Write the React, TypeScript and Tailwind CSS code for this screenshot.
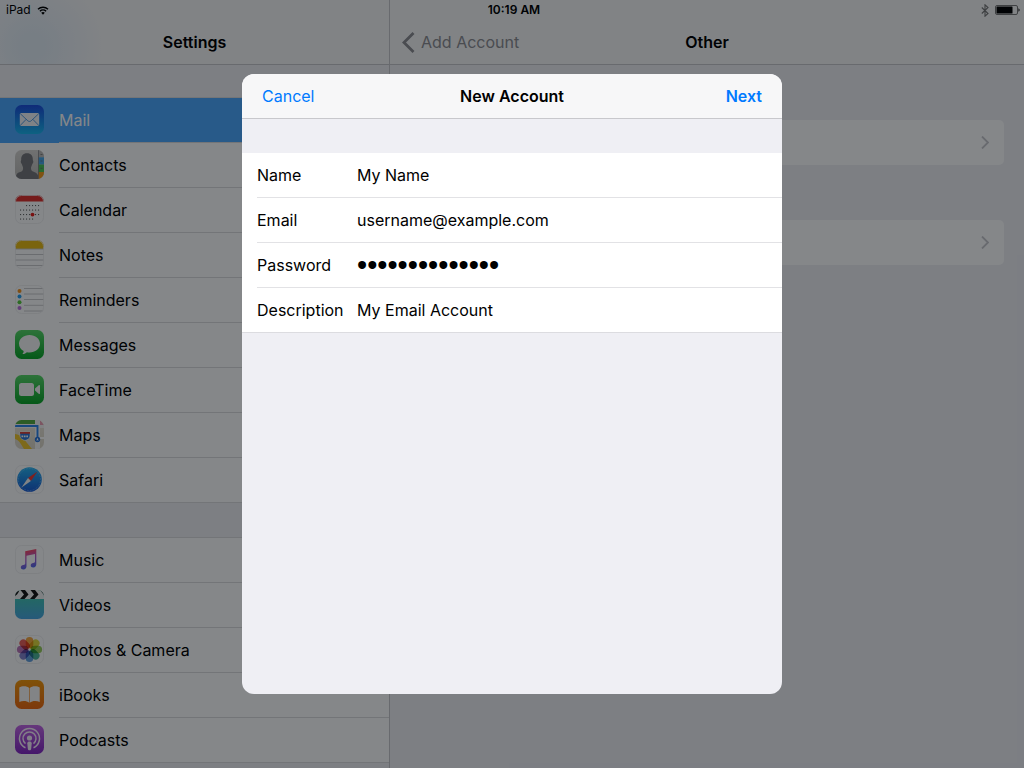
import { useState } from "react";
import type { ReactNode } from "react";

const IconFrame = ({ id, from, to, children }: { id: string; from: string; to: string; children?: ReactNode }) => (
    <svg viewBox="0 0 29 29" className="mb-0.5 h-[29px] w-[29px] shrink-0" aria-hidden="true">
        <defs>
            <linearGradient id={`${id}-bg`} x1="0" y1="0" x2="0" y2="1">
                <stop offset="0" stopColor={from} />
                <stop offset="1" stopColor={to} />
            </linearGradient>
            <clipPath id={`${id}-clip`}>
                <rect width="29" height="29" rx="6.5" />
            </clipPath>
        </defs>
        <g clipPath={`url(#${id}-clip)`}>
            <rect width="29" height="29" fill={`url(#${id}-bg)`} />
            {children}
        </g>
        {from === "#ffffff" && (
            <rect x="0.5" y="0.5" width="28" height="28" rx="6" fill="none" stroke="#ededef" strokeWidth="0.8" />
        )}
    </svg>
);

const MailIcon = () => (
    <IconFrame id="mail" from="#1d4fe0" to="#1bb8f0">
        <rect x="4.8" y="8" width="19.4" height="13" rx="1.4" fill="#f4f6fa" />
        <path d="M5.2 8.6l7.6 7.2c1 .9 2.4.9 3.4 0l7.6-7.2M5.2 20.5l5.9-6.1M23.8 20.5l-5.9-6.1" fill="none" stroke="#2f86dc" strokeWidth="0.8" />
    </IconFrame>
);

const ContactsIcon = () => (
    <IconFrame id="contacts" from="#d8d6d2" to="#bdbbb8">
        <path d="M12 3.2c3.9 0 6 2.6 5.8 6.3-.1 1.1.9 1.2.4 2.9-.3 1-.9 1.2-1.2 2.4-.4 1.6-1 2-1 3.4 0 2.6 1.3 3.1 3.7 4 1.8.7 3 1.8 3.5 3.8V29H1v-3c.6-2 1.6-3 3.4-3.7 2.5-.9 3.7-1.5 3.7-4.1 0-1.4-.7-1.9-1-3.4-.3-1.2-.9-1.4-1.2-2.4-.4-1.7.4-1.9.3-2.9C6 5.8 8.2 3.2 12 3.2z" fill="#77777b" />
        <rect x="23.5" width="5.5" height="7.3" fill="#bfbdba" />
        <rect x="23.5" y="7.3" width="5.5" height="7.3" fill="#4aa8e8" />
        <rect x="23.5" y="14.6" width="5.5" height="7.4" fill="#4bc658" />
        <rect x="23.5" y="22" width="5.5" height="7" fill="#f59b1c" />
        <path d="M23.5 0v29" stroke="#77777b" strokeWidth="0.7" />
        <path d="M25.5 11h2M25.5 18.3h2M25.5 4.5h2" stroke="#666" strokeWidth="0.7" />
    </IconFrame>
);

const CalendarIcon = () => (
    <IconFrame id="calendar" from="#ffffff" to="#ffffff">
        <rect width="29" height="6.5" fill="#e0302c" />
        {[10.5, 15, 19.5, 24].map((y, row) =>
            [5.5, 8.5, 11.5, 14.5, 17.5, 20.5, 23.5]
                .filter((_, col) => (row > 0 || col > 1) && (row < 3 || col < 5))
                .map((x) => <rect key={`${x}-${y}`} x={x - 0.5} y={y - 0.5} width="1.1" height="1.1" fill="#666" />)
        )}
        <circle cx="17.5" cy="19.6" r="1.9" fill="#e8201c" />
    </IconFrame>
);

const NotesIcon = () => (
    <IconFrame id="notes" from="#ffffff" to="#ffffff">
        <rect width="29" height="9" fill="#eabc14" />
        <path d="M0 9h29M0 14.5h29M0 20h29M0 25.5h29" stroke="#c6c6c8" strokeWidth="0.9" />
    </IconFrame>
);

const RemindersIcon = () => (
    <IconFrame id="reminders" from="#ffffff" to="#ffffff">
        <circle cx="4.5" cy="6" r="2" fill="#f59420" />
        <circle cx="4.5" cy="11.5" r="2" fill="#28a0ee" />
        <circle cx="4.5" cy="17.3" r="2" fill="#57cc3e" />
        <circle cx="4.5" cy="23" r="2" fill="#bd72dc" />
        <path d="M9 3.5h20M9 9h20M9 14.5h20M9 20.3h20M9 26h20" stroke="#c6c6c8" strokeWidth="0.9" />
    </IconFrame>
);

const MessagesIcon = () => (
    <IconFrame id="messages" from="#58d868" to="#0ba628">
        <path d="M14.5 5C8.7 5 4 8.9 4 13.7c0 3.1 1.8 5.7 4.7 7.3-.1 1.2-.5 2.2-1.3 3.1 1.7 0 3.2-.6 4.5-1.9.8.2 1.7.3 2.6.3C20.3 22.5 25 18.5 25 13.7S20.3 5 14.5 5z" fill="#f7f7f7" />
    </IconFrame>
);

const FaceTimeIcon = () => (
    <IconFrame id="facetime" from="#58d868" to="#0ba628">
        <rect x="4" y="8" width="15" height="13" rx="2.5" fill="#f7f7f7" />
        <path d="M20 13.5l3.7-3.2c.6-.5 1.3-.3 1.3.6v7.3c0 .9-.7 1.1-1.3.6L20 15.6z" fill="#f7f7f7" />
    </IconFrame>
);

const MapsIcon = () => (
    <IconFrame id="maps" from="#ece7da" to="#dcd6c8">
        <path d="M0 0h20v4H0z" fill="#55ac42" />
        <path d="M0 4h29v4H0z" fill="#f6f6f6" />
        <path d="M0 14c7 1 9 5 12 9l5 6H9C6 24 4 20 0 19z" fill="#f0c52c" />
        <path d="M20 0h5v29h-5z" fill="#f6f6f6" />
        <path d="M25 0l4 5h-4z" fill="#ee9fb4" />
        <path d="M25 17h4v2h-4z" fill="#fff" />
        <path d="M0 6h22.5v13" fill="none" stroke="#2b84ec" strokeWidth="1.9" />
        <path d="M5 12h10c0 4 1 7-5 8.5C4 19 5 16 5 12z" fill="#2e77d8" stroke="#fff" strokeWidth="0.6" />
        <path d="M5 12.8h10" stroke="#dc4338" strokeWidth="1.7" />
        <path d="M6.5 16.4h7" stroke="#fff" strokeWidth="1.6" strokeDasharray="1.7 0.7" />
        <circle cx="22.5" cy="19.5" r="2.7" fill="#2b75d8" />
        <path d="M22.5 17.8l1.2 3-1.2-.6-1.2.6z" fill="#fff" />
    </IconFrame>
);

const SafariIcon = () => (
    <IconFrame id="safari" from="#ffffff" to="#ffffff">
        <defs>
            <linearGradient id="safari-dial" x1="0" y1="0" x2="0" y2="1">
                <stop offset="0" stopColor="#28b5f2" />
                <stop offset="1" stopColor="#1a5bd4" />
            </linearGradient>
        </defs>
        <circle cx="14.5" cy="14.5" r="12.3" fill="url(#safari-dial)" />
        <circle cx="14.5" cy="14.5" r="11" fill="none" stroke="#a9d7f7" strokeWidth="0.9" strokeDasharray="0.4 1.2" />
        <path d="M22.5 6.5L15.9 16l-2.9-2.9z" fill="#f23a33" />
        <path d="M6.5 22.5L13 13.1l2.9 2.9z" fill="#f8f8f8" />
    </IconFrame>
);

const MusicIcon = () => (
    <IconFrame id="music" from="#ffffff" to="#ffffff">
        <defs>
            <linearGradient id="music-note" x1="0.3" y1="0" x2="0.5" y2="1">
                <stop offset="0.1" stopColor="#fa4a67" />
                <stop offset="0.5" stopColor="#b45ccd" />
                <stop offset="1" stopColor="#4c6df0" />
            </linearGradient>
        </defs>
        <path d="M10.2 6.2L21.3 4v15.2c0 1.9-1.2 3-3 3.2-1.5.1-2.6-.7-2.6-2 0-1.4 1-2.2 2.5-2.5 1.3-.2 1.8-.5 1.8-1.5V9l-8.5 1.7v10.5c0 1.9-1.2 3-3 3.2-1.5.1-2.7-.7-2.7-2 0-1.4 1-2.2 2.5-2.5 1.3-.2 1.9-.5 1.9-1.5z" fill="url(#music-note)" />
    </IconFrame>
);

const VideosIcon = () => (
    <IconFrame id="videos" from="#43cfa6" to="#4aa7e2">
        <rect width="29" height="9" fill="#f3f3f3" />
        <path d="M0 9V6l2-1.5L4 1.5 3 0H0zM5.5 0H10l3.5 4.5L9.5 9H5l4-4.5zM15.5 0H20l3.5 4.5L19.5 9H15l4-4.5zM25 0h4v5z" fill="#161616" />
    </IconFrame>
);

const petals = ["#f69a1f", "#dcd51d", "#86c440", "#2fa988", "#4a90d9", "#6f6fc4", "#b05fae", "#e8453c"];

const PhotosIcon = () => (
    <IconFrame id="photos" from="#ffffff" to="#ffffff">
        {petals.map((color, i) => (
            <rect
                key={color}
                x="10.7"
                y="1.9"
                width="7.6"
                height="11.4"
                rx="3.8"
                fill={color}
                transform={`rotate(${i * 45} 14.5 14.5)`}
                className="opacity-85 mix-blend-multiply"
            />
        ))}
    </IconFrame>
);

const BooksIcon = () => (
    <IconFrame id="books" from="#f59a0b" to="#ee6a12">
        <path d="M14.2 8C12.3 6 7 5.6 4.3 7.6V22c3-1.6 7.6-1.5 9.9.8zM14.8 8c1.9-2 7.2-2.4 9.9-.4V22c-3-1.6-7.6-1.5-9.9.8z" fill="#fafafa" />
    </IconFrame>
);

const PodcastsIcon = () => (
    <IconFrame id="podcasts" from="#c468e6" to="#8428c4">
        <g fill="none" stroke="#f7effb" strokeWidth="1.5">
            <path d="M10.5 22.7a10 10 0 1 1 8 0" />
            <path d="M10.5 18.6a6.5 6.5 0 1 1 8 0" />
        </g>
        <circle cx="14.5" cy="13" r="2.6" fill="#f7effb" />
        <path d="M12.3 18.2c0-1.2 1-1.7 2.2-1.7s2.2.5 2.2 1.7l-.5 5.5c-.1 1-.8 1.5-1.7 1.5s-1.6-.5-1.7-1.5z" fill="#f7effb" />
    </IconFrame>
);

const groups = [
    [
        { name: "Mail", Icon: MailIcon },
        { name: "Contacts", Icon: ContactsIcon },
        { name: "Calendar", Icon: CalendarIcon },
        { name: "Notes", Icon: NotesIcon },
        { name: "Reminders", Icon: RemindersIcon },
        { name: "Messages", Icon: MessagesIcon },
        { name: "FaceTime", Icon: FaceTimeIcon },
        { name: "Maps", Icon: MapsIcon },
        { name: "Safari", Icon: SafariIcon },
    ],
    [
        { name: "Music", Icon: MusicIcon },
        { name: "Videos", Icon: VideosIcon },
        { name: "Photos & Camera", Icon: PhotosIcon },
        { name: "iBooks", Icon: BooksIcon },
        { name: "Podcasts", Icon: PodcastsIcon },
    ],
];

const fields = [
    { id: "name", label: "Name", type: "text" },
    { id: "email", label: "Email", type: "email" },
    { id: "password", label: "Password", type: "password" },
    { id: "description", label: "Description", type: "text" },
];

const StatusBar = () => (
    <div className="absolute inset-x-0 top-0 grid h-5 grid-cols-[1fr_auto_1fr] items-center pr-1 pl-1.5 text-xs">
        <div className="flex items-center gap-1.5">
            iPad
            <svg viewBox="0 0 12 9" className="h-[9px] w-3" aria-label="Wi-Fi">
                <path d="M1 3.3a7.2 7.2 0 0 1 10 0M2.9 5.2a4.5 4.5 0 0 1 6.2 0" fill="none" stroke="#000" strokeWidth="1.4" />
                <path d="M6 8.7L4.2 6.8a2.6 2.6 0 0 1 3.6 0z" />
            </svg>
        </div>
        <time className="pl-0.5 font-semibold">10:19 AM</time>
        <div className="flex items-center justify-end gap-1.5">
            <svg viewBox="0 0 8 13" className="h-[13px] w-2" aria-label="Bluetooth">
                <path d="M0.8 3.5l6.2 6-3 2.7V0.8l3 2.7-6.2 6" fill="none" stroke="#777" strokeWidth="1.1" />
            </svg>
            <svg viewBox="0 0 25 10" className="h-2.5 w-[25px]" aria-label="Battery">
                <rect x="0.5" y="0.5" width="22" height="9" rx="1.5" fill="none" stroke="#777" />
                <rect x="1.5" y="1.5" width="16" height="7" rx="0.5" />
                <path d="M23.5 3.3c1.4.5 1.4 2.9 0 3.4z" />
            </svg>
        </div>
    </div>
);

export default function App() {
    const [selected, setSelected] = useState("Mail");
    const [values, setValues] = useState<Record<string, string>>({
        name: "My Name",
        email: "username@example.com",
        password: "mypassword1234",
        description: "My Email Account",
    });

    return (
        <div className="relative flex h-screen overflow-hidden bg-[#efeff4] font-['Inter','Liberation_Sans',sans-serif] text-base text-black">
            <aside className="flex w-[390px] shrink-0 flex-col border-r border-[#c8c8cc]">
                <header className="flex h-[65px] shrink-0 items-center justify-center border-b border-[#c8c8cc] bg-[#f7f7f8] bg-[radial-gradient(circle_at_32px_46px,#e4edf6_10px,#f7f7f8_70px)] pt-5">
                    <h1 className="font-semibold">Settings</h1>
                </header>
                <nav className="flex flex-col gap-[34px] pt-8">
                    {groups.map((items, i) => (
                        <ul key={i} className="border-y border-[#dcdcdf] bg-white">
                            {items.map(({ name, Icon }) => (
                                <li key={name} className="group">
                                    <button
                                        onClick={() => setSelected(name)}
                                        className={
                                            selected === name
                                                ? "flex h-[45px] w-full items-center gap-[15px] bg-[#4da9ff] pl-[15px] text-left text-white"
                                                : "flex h-[45px] w-full items-center gap-[15px] pl-[15px] text-left group-last:h-11"
                                        }
                                    >
                                        <Icon />
                                        <span className="flex h-full flex-1 items-center border-b border-[#dcdcdf] group-last:border-b-0">{name}</span>
                                    </button>
                                </li>
                            ))}
                        </ul>
                    ))}
                </nav>
            </aside>

            <main className="flex-1">
                <header className="grid h-[65px] grid-cols-[1fr_auto_1fr] items-center border-b border-[#c8c8cc] bg-[#f7f7f8] px-3 pt-5">
                    <button className="flex items-center gap-1.5 text-[#8e8e93]">
                        <svg viewBox="0 0 13 21" className="h-[21px] w-[13px]" aria-hidden="true">
                            <path d="M11.5 1L2 10.5l9.5 9.5" fill="none" stroke="currentColor" strokeWidth="2.8" />
                        </svg>
                        Add Account
                    </button>
                    <h2 className="font-semibold">Other</h2>
                </header>
                <div className="flex flex-col gap-[55px] px-5 pt-[55px]">
                    {["Mail accounts", "Server accounts"].map((label) => (
                        <button key={label} aria-label={label} className="flex h-[45px] items-center justify-end rounded-[5px] bg-white pr-[15px]">
                            <svg viewBox="0 0 8 13" className="h-[13px] w-2" aria-hidden="true">
                                <path d="M1 0.5l6 6-6 6" fill="none" stroke="#c7c7cc" strokeWidth="1.8" />
                            </svg>
                        </button>
                    ))}
                </div>
            </main>

            <StatusBar />

            <div className="absolute inset-0 flex items-center justify-center bg-[#000408]/48">
                <form
                    role="dialog"
                    aria-labelledby="dialog-title"
                    onSubmit={(e) => e.preventDefault()}
                    className="flex h-[620px] w-[540px] flex-col overflow-hidden rounded-xl bg-[#efeff4]"
                >
                    <header className="grid h-[45px] grid-cols-[1fr_auto_1fr] items-center border-b border-[#c8c8cc] bg-[#f7f7f8] px-5 text-[#007aff]">
                        <button type="button" className="justify-self-start">Cancel</button>
                        <h2 id="dialog-title" className="font-semibold text-black">New Account</h2>
                        <button type="submit" className="justify-self-end font-semibold">Next</button>
                    </header>
                    <div className="mt-[34px] border-b border-[#dcdce0] bg-white pl-[15px]">
                        {fields.map(({ id, label, type }) => (
                            <div key={id} className="flex h-[45px] items-center border-b border-[#e2e2e5] last:h-11 last:border-b-0">
                                <label htmlFor={id} className="w-[100px] shrink-0">{label}</label>
                                <input
                                    id={id}
                                    type={type}
                                    value={values[id]}
                                    onChange={(e) => setValues({ ...values, [id]: e.target.value })}
                                    className={
                                        type === "password"
                                            ? "h-8 min-w-0 flex-1 font-['Liberation_Sans',sans-serif] text-[29px] leading-8 outline-none"
                                            : "min-w-0 flex-1 outline-none"
                                    }
                                />
                            </div>
                        ))}
                    </div>
                </form>
            </div>
        </div>
    );
}
